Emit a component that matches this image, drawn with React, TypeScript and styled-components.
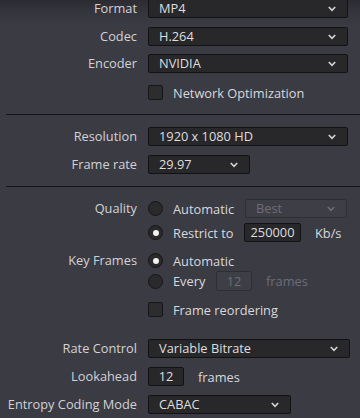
import React from "react";
import styled, { createGlobalStyle } from "styled-components";

const Global = createGlobalStyle`
  html, body { margin: 0; padding: 0; background: #3b3b44; }
  body { font-family: "Open Sans", "Noto Sans", sans-serif; font-size: 12.8px; }
  * { box-sizing: border-box; }
`;

const Page = styled.div`
  width: 360px;
  height: 418px;
  overflow: hidden;
  background: linear-gradient(#2b2b31 0px, #35353d 12px, #3b3b44 26px, #3b3b44 100%);
  display: flex;
  flex-direction: column;
`;

const Inner = styled.div`
  display: flex;
  flex-direction: column;
  margin-top: -1px;
`;

const Row = styled.div<{ $h?: number; $mt?: number }>`
  display: grid;
  grid-template-columns: 137px 1fr;
  column-gap: 11px;
  align-items: center;
  height: ${(p) => p.$h ?? 19}px;
  margin-top: ${(p) => p.$mt ?? 0}px;
  flex: none;
`;

const Label = styled.div`
  text-align: right;
  color: #d2d2d5;
  white-space: nowrap;
  line-height: 19px;
`;

const Controls = styled.div<{ $gap?: number }>`
  display: flex;
  align-items: center;
  gap: ${(p) => p.$gap ?? 10}px;
  height: 100%;
`;

const Separator = styled.div<{ $mt: number }>`
  height: 1px;
  margin-top: ${(p) => p.$mt}px;
  margin-left: 6px;
  background: #141416;
  flex: none;
`;

const SelectBox = styled.div<{ $w: number; $disabled?: boolean }>`
  width: ${(p) => p.$w}px;
  height: 19px;
  display: flex;
  align-items: center;
  justify-content: space-between;
  padding: 0 11px 0 10px;
  border-radius: 2px;
  background: ${(p) => (p.$disabled ? "#3e3e47" : "#28282b")};
  border: 1px solid ${(p) => (p.$disabled ? "#2e2e35" : "#121214")};
  color: ${(p) => (p.$disabled ? "#6d6d74" : "#dedede")};
  flex: none;
`;

const SelectText = styled.span`
  line-height: 17px;
  white-space: nowrap;
`;

const Chevron = styled.svg<{ $disabled?: boolean }>`
  width: 8px;
  height: 6px;
  flex: none;
  stroke: ${(p) => (p.$disabled ? "#6d6d74" : "#d4d4d4")};
`;

const NumBox = styled.div<{ $w: number; $disabled?: boolean }>`
  width: ${(p) => p.$w}px;
  height: ${(p) => (p.$disabled ? 20 : 19)}px;
  display: flex;
  align-items: center;
  justify-content: center;
  border-radius: 2px;
  background: ${(p) => (p.$disabled ? "#3e3e47" : "#28282b")};
  border: 1px solid ${(p) => (p.$disabled ? "#2e2e35" : "#121214")};
  color: ${(p) => (p.$disabled ? "#6d6d74" : "#dedede")};
  line-height: 17px;
  flex: none;
`;

const Text = styled.span<{ $disabled?: boolean; $ml?: number }>`
  color: ${(p) => (p.$disabled ? "#6d6d74" : "#d8d8da")};
  white-space: nowrap;
  margin-left: ${(p) => p.$ml ?? 0}px;
`;

const Radio = styled.span<{ $checked?: boolean }>`
  width: 15px;
  height: 15px;
  border-radius: 50%;
  background: #2a2a2c;
  border: 1px solid #161618;
  display: flex;
  align-items: center;
  justify-content: center;
  flex: none;
  &::after {
    content: "";
    display: ${(p) => (p.$checked ? "block" : "none")};
    width: 6px;
    height: 6px;
    border-radius: 50%;
    background: #f2f2f2;
  }
`;

const Checkbox = styled.span`
  width: 15px;
  height: 15px;
  border-radius: 2px;
  background: #2d2d30;
  border: 1px solid #161618;
  flex: none;
`;

const Fixed = styled.span<{ $w: number }>`
  width: ${(p) => p.$w}px;
  flex: none;
  white-space: nowrap;
  color: #d8d8da;
`;

function Select({ value, width, disabled }: { value: string; width: number; disabled?: boolean }) {
  return (
    <SelectBox $w={width} $disabled={disabled}>
      <SelectText>{value}</SelectText>
      <Chevron $disabled={disabled} viewBox="0 0 8 6" fill="none" strokeWidth={1.6}>
        <path d="M0.8 1 L4 4.4 L7.2 1" />
      </Chevron>
    </SelectBox>
  );
}

export default function App() {
  return (
    <>
      <Global />
      <Page>
        <Inner>
          <Row>
            <Label>Format</Label>
            <Controls>
              <Select value="MP4" width={200} />
            </Controls>
          </Row>
          <Row $mt={9}>
            <Label>Codec</Label>
            <Controls>
              <Select value="H.264" width={200} />
            </Controls>
          </Row>
          <Row $mt={8}>
            <Label>Encoder</Label>
            <Controls>
              <Select value="NVIDIA" width={200} />
            </Controls>
          </Row>
          <Row $mt={10}>
            <Label />
            <Controls>
              <Checkbox />
              <Text>Network Optimization</Text>
            </Controls>
          </Row>
          <Separator $mt={12} />
          <Row $mt={12}>
            <Label>Resolution</Label>
            <Controls>
              <Select value="1920 x 1080 HD" width={200} />
            </Controls>
          </Row>
          <Row $mt={9}>
            <Label>Frame rate</Label>
            <Controls>
              <Select value="29.97" width={102} />
            </Controls>
          </Row>
          <Separator $mt={12} />
          <Row $mt={12}>
            <Label>Quality</Label>
            <Controls>
              <Radio />
              <Fixed $w={62}>Automatic</Fixed>
              <Select value="Best" width={102} disabled />
            </Controls>
          </Row>
          <Row $mt={5}>
            <Label />
            <Controls>
              <Radio $checked />
              <Fixed $w={61}>Restrict to</Fixed>
              <NumBox $w={57}>250000</NumBox>
              <Text $ml={4}>Kb/s</Text>
            </Controls>
          </Row>
          <Row $mt={9}>
            <Label>Key Frames</Label>
            <Controls>
              <Radio $checked />
              <Text>Automatic</Text>
            </Controls>
          </Row>
          <Row $mt={1} $h={20}>
            <Label />
            <Controls>
              <Radio />
              <Fixed $w={33}>Every</Fixed>
              <NumBox $w={36} $disabled>12</NumBox>
              <Text $disabled $ml={4}>frames</Text>
            </Controls>
          </Row>
          <Row $mt={9}>
            <Label />
            <Controls>
              <Checkbox />
              <Text>Frame reordering</Text>
            </Controls>
          </Row>
          <Row $mt={20}>
            <Label>Rate Control</Label>
            <Controls>
              <Select value="Variable Bitrate" width={202} />
            </Controls>
          </Row>
          <Row $mt={9}>
            <Label>Lookahead</Label>
            <Controls $gap={14}>
              <NumBox $w={36}>12</NumBox>
              <Text>frames</Text>
            </Controls>
          </Row>
          <Row $mt={9}>
            <Label>Entropy Coding Mode</Label>
            <Controls>
              <Select value="CABAC" width={143} />
            </Controls>
          </Row>
        </Inner>
      </Page>
    </>
  );
}
